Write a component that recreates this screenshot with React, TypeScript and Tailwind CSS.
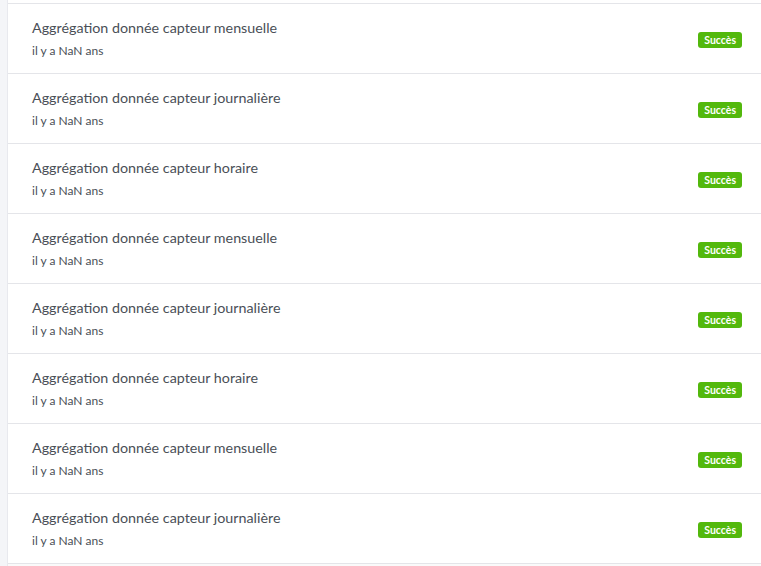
import React from "react";

const rows = [
  "Aggrégation donnée capteur mensuelle",
  "Aggrégation donnée capteur journalière",
  "Aggrégation donnée capteur horaire",
  "Aggrégation donnée capteur mensuelle",
  "Aggrégation donnée capteur journalière",
  "Aggrégation donnée capteur horaire",
  "Aggrégation donnée capteur mensuelle",
  "Aggrégation donnée capteur journalière",
];

export default function App() {
  return (
    <div
      className="flex h-[566px] w-[761px] overflow-hidden bg-[#f4f5f8]"
      style={{ fontFamily: "Lato, 'Noto Sans', sans-serif" }}
    >
      <div className="w-[7px] shrink-0 bg-[#f4f5f8]" />
      <div className="flex flex-1 flex-col border-l border-[#e8e9ee] bg-white">
        <div className="h-[3px] shrink-0" />
        {rows.map((title, idx) => (
          <div
            key={idx}
            className="flex h-[70px] shrink-0 items-center justify-between border-t border-[#e4e5e9] pl-[24px] pr-[19px]"
          >
            <div className="flex flex-col">
              <span className="text-[14.3px] leading-[20px] text-[#4a4f57]">{title}</span>
              <span className="mt-[5px] text-[12px] leading-[16px] text-[#4a4f57]">il y a NaN ans</span>
            </div>
            <span className="mt-[2px] rounded-[3px] bg-[#52b80c] px-[6px] py-[1px] text-[10.5px] font-bold leading-[14px] text-white">
              Succès
            </span>
          </div>
        ))}
        <div className="flex-1 border-t border-[#e4e5e9] bg-[#fafafa]" />
      </div>
    </div>
  );
}
